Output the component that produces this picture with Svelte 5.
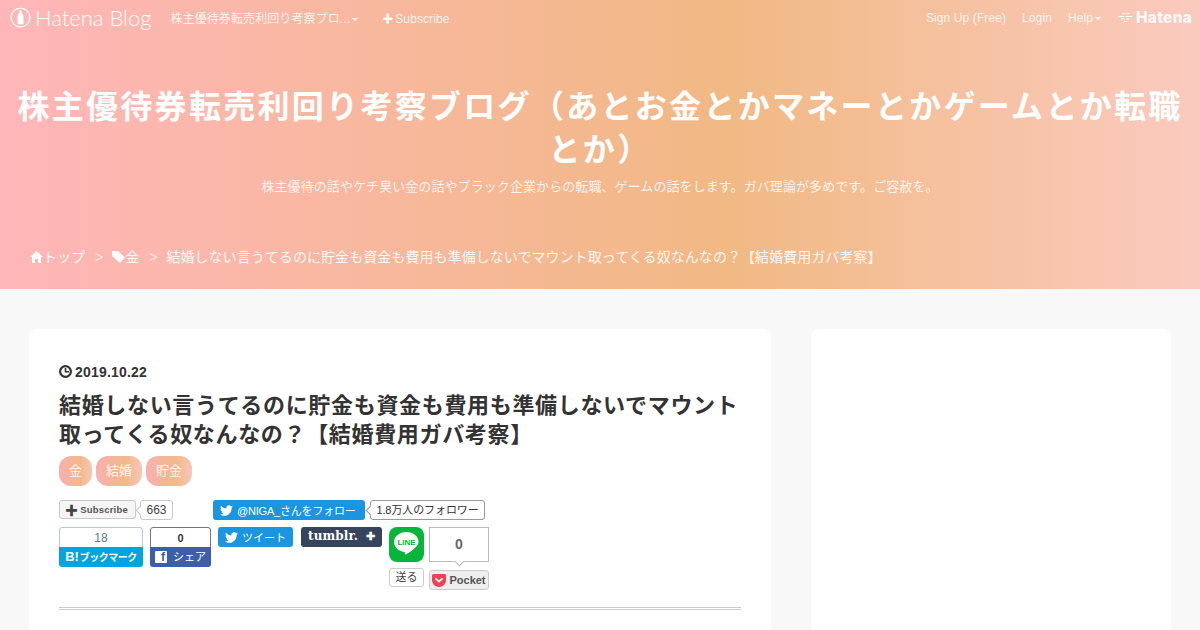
<script lang="ts">
  const crumbs = ['トップ', '金'];
  const tags = ['金', '結婚', '貯金'];
  const title = '結婚しない言うてるのに貯金も資金も費用も準備しないでマウント取ってくる奴なんなの？【結婚費用ガバ考察】';
  const bird = 'M24 4.6c-.9.4-1.8.7-2.8.8 1-.6 1.8-1.6 2.2-2.7-1 .6-2 1-3.1 1.2C19.3 2.9 18 2.3 16.6 2.3c-2.7 0-4.9 2.2-4.9 4.9 0 .4 0 .8.1 1.1C7.7 8.1 4.1 6.1 1.7 3.1c-.4.7-.7 1.6-.7 2.5 0 1.7.9 3.2 2.2 4.1-.8 0-1.6-.2-2.2-.6v.1c0 2.4 1.7 4.4 3.9 4.8-.4.1-.8.2-1.3.2-.3 0-.6 0-.9-.1.6 2 2.4 3.4 4.6 3.4-1.7 1.3-3.8 2.1-6.1 2.1-.4 0-.8 0-1.2-.1 2.2 1.4 4.8 2.2 7.5 2.2 9.1 0 14-7.5 14-14v-.6c1-.7 1.8-1.6 2.5-2.5z';
</script>

<div class="page">
  <header class="hero">
    <nav class="navbar">
      <div class="nav-left">
        <span class="logo">
          <svg width="21" height="21" viewBox="0 0 21 21" aria-hidden="true">
            <circle cx="10.5" cy="10.5" r="9.4" fill="none" stroke="#fff" stroke-width="1.3" />
            <path d="M9.300 3.600h2.400v2.600c1.200 1 1.800 2 1.800 3.400v6.600c0 .7-.4 1-1 1H8.500c-.6 0-1-.3-1-1V9.600c0-1.400.6-2.400 1.800-3.400z" fill="#fff" />
          </svg>
          <span class="logo-text">Hatena Blog</span>
        </span>
        <span class="nav-item blog-name">株主優待券転売利回り考察ブロ...<i class="caret"></i></span>
        <span class="nav-item sub"><b class="plus">✚</b>Subscribe</span>
      </div>
      <div class="nav-right">
        <span class="nav-item">Sign Up (Free)</span>
        <span class="nav-item">Login</span>
        <span class="nav-item">Help<i class="caret"></i></span>
        <span class="hatena">
          <svg width="16" height="11" viewBox="0 0 16 11" aria-hidden="true">
            <path d="M5 1.500h3M9.500 1.500h3M1 4.500h6M8.500 4.500h6.500M4 7h3.500M9 7h3M7 9.500h3" stroke="#fff" stroke-width="1" fill="none" />
          </svg>
          Hatena
        </span>
      </div>
    </nav>
    <div class="heading">
      <h1>株主優待券転売利回り考察ブログ（あとお金とかマネーとかゲームとか転職とか）</h1>
      <p>株主優待の話やケチ臭い金の話やブラック企業からの転職、ゲームの話をします。ガバ理論が多めです。ご容赦を。</p>
    </div>
    <div class="crumbs">
      <svg width="13" height="12" viewBox="0 0 13 12" aria-hidden="true">
        <path d="M6.500 0 13 6h-2v6H8V8H5v4H2V6H0z" fill="#fff" />
      </svg>
      <span>{crumbs[0]}</span>
      <span class="sep">&gt;</span>
      <svg width="13" height="12" viewBox="0 0 13 12" aria-hidden="true">
        <path d="M0 0h6l7 6.500L8 12 0 5z" fill="#fff" />
      </svg>
      <span>{crumbs[1]}</span>
      <span class="sep">&gt;</span>
      <span class="crumb-title">{title}</span>
    </div>
  </header>

  <main class="content">
    <article class="card main-card">
      <div class="date">
        <svg width="13" height="13" viewBox="0 0 13 13" aria-hidden="true">
          <circle cx="6.500" cy="6.500" r="5.400" fill="none" stroke="#333" stroke-width="2.200" />
          <path d="M6.500 3v3.800H10" fill="none" stroke="#333" stroke-width="1.600" />
        </svg>
        2019.10.22
      </div>
      <h2>{title}</h2>
      <div class="tags">
        {#each tags as tag}
          <span class="tag">{tag}</span>
        {/each}
      </div>

      <div class="share">
        <div class="share-row first">
          <span class="hb-sub"><b class="hb-plus">✚</b>Subscribe</span>
          <span class="hb-count">663</span>
          <span class="tw-follow">
            <svg width="13" height="13" viewBox="0 0 24 24" aria-hidden="true"><path d={bird} fill="#fff" /></svg>
            @NIGA_さんをフォロー
          </span>
          <span class="tw-count">1.8万人のフォロワー</span>
        </div>
        <div class="share-row second">
          <div class="box hatebu">
            <span class="num">18</span>
            <span class="label"><b class="hb-mark">B!</b>ブックマーク</span>
          </div>
          <div class="box fb">
            <span class="num">0</span>
            <span class="label"><i class="f">f</i>シェア</span>
          </div>
          <span class="tweet">
            <svg width="13" height="13" viewBox="0 0 24 24" aria-hidden="true"><path d={bird} fill="#fff" /></svg>
            ツイート
          </span>
          <span class="tumblr">tumblr.<b>✚</b></span>
          <div class="line-col">
            <span class="line-icon">
              <svg width="31" height="31" viewBox="0 0 31 31" aria-hidden="true">
                <path d="M15.500 3C8.600 3 3 7.400 3 13c0 5 4.400 9.100 10.300 9.900.9.200.7 1 .5 1.900-.1.700.2 1 1 .6 2.700-1.300 8.400-5.100 11-8.400 1.100-1.300 1.700-2.800 1.700-4C27.500 7.400 22.400 3 15.500 3z" fill="#fff" />
              </svg>
              <span class="line-word">LINE</span>
            </span>
            <span class="line-send">送る</span>
          </div>
          <div class="pocket-col">
            <span class="pocket-count">0</span>
            <span class="pocket">
              <svg width="14" height="13" viewBox="0 0 14 13" aria-hidden="true">
                <path d="M1.500 0h11c.8 0 1.500.7 1.500 1.500V6c0 3.900-3.100 7-7 7s-7-3.100-7-7V1.500C0 .7.700 0 1.500 0z" fill="#ee4056" />
                <path d="M4 4.800 7 7.600l3-2.800" fill="none" stroke="#fff" stroke-width="1.800" stroke-linecap="round" />
              </svg>
              Pocket
            </span>
          </div>
        </div>
      </div>
      <hr />
    </article>
    <aside class="card side-card"></aside>
  </main>
</div>

<style>
  :global(body) {
    background: #f8f8f8;
  }
  .page {
    width: 1200px;
    height: 630px;
    overflow: hidden;
    color: #333;
    font-family: "Liberation Sans", "Noto Sans CJK JP", sans-serif;
  }
  .hero {
    height: 289px;
    box-sizing: border-box;
    color: #fff;
    background: linear-gradient(90deg, #ffb6b9 0%, #f1b984 61%, #fbcabf 100%);
    display: flex;
    flex-direction: column;
  }
  .navbar {
    height: 36px;
    flex: none;
    display: flex;
    justify-content: space-between;
    align-items: center;
    padding: 0 8px 1px 10px;
    box-sizing: border-box;
    font-size: 12px;
    letter-spacing: 0.1px;
    color: rgba(255, 255, 255, 0.85);
  }
  .nav-left, .nav-right {
    display: flex;
    align-items: center;
  }
  .logo {
    display: flex;
    align-items: center;
    gap: 4px;
    margin-right: 19px;
  }
  .logo-text {
    font-family: Lato, sans-serif;
    font-weight: 300;
    font-size: 22px;
    letter-spacing: 0;
    color: #fff;
  }
  .blog-name {
    margin-right: 24px;
  }
  .plus {
    font-size: 11px;
    margin-right: 2px;
    color: #fff;
  }
  .caret {
    display: inline-block;
    margin-left: 2px;
    vertical-align: middle;
    border: 3px solid transparent;
    border-top-color: rgba(255, 255, 255, 0.9);
    border-bottom-width: 0;
  }
  .nav-right .nav-item {
    margin-right: 16px;
  }
  .hatena {
    display: flex;
    align-items: center;
    gap: 3px;
    font-family: Inter, sans-serif;
    font-weight: 800;
    font-size: 15.500px;
    letter-spacing: 0.2px;
    color: rgba(255, 255, 255, 0.92);
  }
  .heading {
    margin-top: 50px;
    padding: 0 15px;
    text-align: center;
    flex: none;
  }
  h1 {
    margin: 0;
    font-size: 32px;
    line-height: 43px;
    font-weight: 700;
    letter-spacing: 2.3px;
  }
  .heading p {
    margin: 5px 0 0;
    font-size: 13px;
    line-height: 20px;
    letter-spacing: 0.08px;
    color: rgba(255, 255, 255, 0.85);
  }
  .crumbs {
    margin-top: 50px;
    padding-left: 30px;
    display: flex;
    align-items: center;
    font-size: 14px;
    line-height: 20px;
    color: rgba(255, 255, 255, 0.92);
  }
  .crumb-title {
    letter-spacing: 0.06px;
  }
  .sep {
    margin: 0 9px 0 10px;
    color: rgba(255, 255, 255, 0.7);
  }
  .content {
    display: flex;
    gap: 40px;
    padding: 40px 29px 0;
  }
  .card {
    background: #fff;
    border-radius: 8px;
    height: 400px;
    box-sizing: border-box;
  }
  .main-card {
    width: 742px;
    padding: 33px 30px 0;
  }
  .side-card {
    width: 360px;
  }
  .date {
    display: flex;
    align-items: center;
    gap: 3px;
    font-size: 14px;
    line-height: 20px;
    font-weight: 700;
    letter-spacing: 0.2px;
  }
  .date svg {
    margin-top: -2px;
  }
  h2 {
    margin: 9px 0 0;
    font-size: 22px;
    line-height: 29px;
    font-weight: 700;
    letter-spacing: 0.67px;
    color: #333;
  }
  .tags {
    display: flex;
    gap: 4px;
    margin-top: 7px;
  }
  .tag {
    padding: 0 10px;
    height: 30px;
    line-height: 30px;
    border-radius: 12px;
    font-size: 13px;
    color: rgba(255, 255, 255, 0.9);
    background: linear-gradient(90deg, #f9b0ae, #f1b98a 65%, #f8c6ba);
  }
  .share {
    margin-top: 14px;
    font-size: 11px;
  }
  .share-row {
    display: flex;
    align-items: flex-start;
  }
  .first {
    height: 27px;
  }
  .second {
    gap: 7px;
  }
  .hb-sub {
    display: flex;
    align-items: center;
    box-sizing: border-box;
    width: 77px;
    height: 19px;
    padding-left: 5px;
    border: 1px solid #c9c9c9;
    border-radius: 3px;
    background: #f5f5f5;
    font-size: 9.500px;
    font-weight: 700;
    letter-spacing: 0.2px;
    color: #555;
  }
  .hb-plus {
    font-size: 13px;
    margin-right: 2px;
    color: #444;
  }
  .hb-count, .tw-count {
    position: relative;
    height: 20px;
    box-sizing: border-box;
    border: 1px solid #c9c9c9;
    border-radius: 3px;
    text-align: center;
    color: #444;
    background: #fff;
  }
  .hb-count::before, .tw-count::before {
    content: "";
    position: absolute;
    left: -4px;
    top: 6px;
    width: 6px;
    height: 6px;
    background: #fff;
    border-left: 1px solid #c9c9c9;
    border-bottom: 1px solid #c9c9c9;
    transform: rotate(45deg);
  }
  .hb-count {
    margin-left: 4px;
    width: 33px;
    line-height: 18px;
    font-size: 12px;
  }
  .tw-follow, .tweet {
    display: flex;
    align-items: center;
    gap: 4px;
    height: 20px;
    padding: 0 0 0 7px;
    background: #1b95e0;
    border-radius: 3px;
    color: #fff;
    box-sizing: border-box;
    white-space: nowrap;
    flex: none;
    font-size: 11px;
  }
  .tw-follow {
    margin-left: 40px;
    width: 152px;
    letter-spacing: -0.2px;
  }
  .tw-count {
    margin-left: 5px;
    width: 115px;
    border-color: #999;
    line-height: 18px;
    color: #333;
    letter-spacing: -0.1px;
    white-space: nowrap;
  }
  .tw-count::before {
    border-color: #999;
  }
  .box {
    display: flex;
    flex-direction: column;
    height: 40px;
    box-sizing: border-box;
    border-radius: 3px;
    overflow: hidden;
    text-align: center;
  }
  .num {
    height: 20px;
    line-height: 20px;
    box-sizing: border-box;
    border: 1px solid;
    border-bottom: none;
    border-radius: 3px 3px 0 0;
    background: #fff;
  }
  .label {
    height: 20px;
    line-height: 20px;
    color: #fff;
    font-weight: 700;
    white-space: nowrap;
  }
  .hatebu {
    width: 84px;
  }
  .hatebu .num {
    border-color: #b5c9d6;
    color: #5f7694;
    font-size: 12px;
  }
  .hatebu .label {
    background: #00a4de;
    font-size: 10px;
    letter-spacing: -0.5px;
  }
  .hb-mark {
    font-size: 13px;
    letter-spacing: 0;
    margin-right: 1px;
  }
  .fb {
    width: 61px;
  }
  .fb .num {
    border-color: #777;
    color: #333;
    font-size: 11px;
    font-weight: 700;
  }
  .fb .label {
    background: #3b5fa8;
    font-weight: 400;
    display: flex;
    justify-content: center;
    align-items: center;
    gap: 6px;
  }
  .f {
    display: block;
    width: 12px;
    height: 12px;
    background: #fff;
    color: #3b5fa8;
    border-radius: 1px;
    font: 700 12px/12px "Liberation Sans", sans-serif;
    text-align: right;
    padding-right: 2px;
    box-sizing: border-box;
  }
  .tweet {
    width: 75px;
  }
  .tumblr {
    display: flex;
    align-items: center;
    justify-content: space-between;
    width: 81px;
    height: 20px;
    box-sizing: border-box;
    padding: 0 7px 2px;
    margin-left: 1px;
    background: #35465c;
    border-radius: 3px;
    color: #fff;
    font: 700 12px/18px "DejaVu Serif", serif;
    letter-spacing: 0.1px;
    white-space: nowrap;
  }
  .tumblr b {
    font: 700 11px/18px "Liberation Sans", sans-serif;
  }
  .line-col {
    width: 35px;
    display: flex;
    flex-direction: column;
    align-items: center;
  }
  .line-icon {
    position: relative;
    display: flex;
    justify-content: center;
    align-items: center;
    width: 35px;
    height: 35px;
    background: #08b53b;
    border-radius: 8px;
  }
  .line-word {
    position: absolute;
    top: 11px;
    left: 0;
    right: 0;
    text-align: center;
    font-size: 8px;
    line-height: 10px;
    font-weight: 700;
    color: #08b53b;
  }
  .line-send {
    margin-top: 6px;
    width: 35px;
    height: 19px;
    box-sizing: border-box;
    border: 1px solid #ccc;
    border-radius: 3px;
    text-align: center;
    line-height: 17px;
    color: #444;
  }
  .pocket-col {
    margin-left: -2px;
    display: flex;
    flex-direction: column;
    width: 60px;
  }
  .pocket-count {
    position: relative;
    height: 35px;
    box-sizing: border-box;
    border: 1px solid #bbb;
    text-align: center;
    line-height: 33px;
    font-size: 14px;
    font-weight: 700;
    color: #666;
    background: #fff;
  }
  .pocket-count::after {
    content: "";
    position: absolute;
    left: 26px;
    bottom: -4px;
    width: 6px;
    height: 6px;
    background: #fff;
    border-right: 1px solid #bbb;
    border-bottom: 1px solid #bbb;
    transform: rotate(45deg);
  }
  .pocket {
    display: flex;
    align-items: center;
    justify-content: center;
    gap: 3px;
    margin-top: 8px;
    height: 20px;
    box-sizing: border-box;
    border: 1px solid #ccc;
    border-radius: 3px;
    background: #eee;
    font-weight: 700;
    color: #555;
  }
  hr {
    margin: 17px 0 0;
    height: 3px;
    box-sizing: border-box;
    border: none;
    border-top: 1px solid #ccc;
    border-bottom: 1px solid #ccc;
  }
</style>
